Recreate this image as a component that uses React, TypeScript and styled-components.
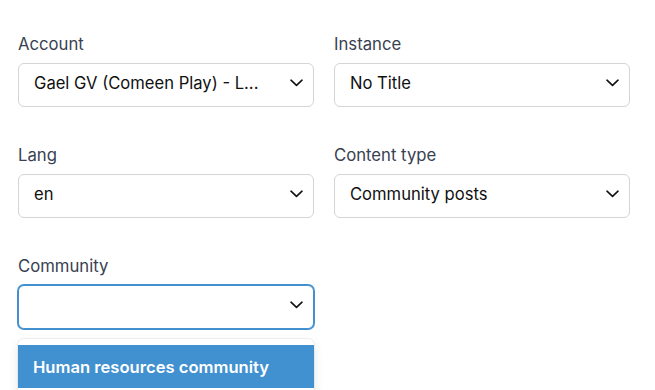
import React from "react";
import styled, { createGlobalStyle } from "styled-components";

const Global = createGlobalStyle`
  html, body { margin: 0; padding: 0; background: #ffffff; }
  body { font-family: Inter, "Noto Sans", "Liberation Sans", sans-serif; -webkit-font-smoothing: antialiased; }
  * { box-sizing: border-box; }
`;

const Form = styled.div`
  display: grid;
  grid-template-columns: 296px 296px;
  column-gap: 20px;
  row-gap: 36px;
  padding: 32px 26px 0 18px;
  align-items: start;
  min-height: 390px;
  align-content: start;
`;

const Field = styled.div`
  position: relative;
  display: flex;
  flex-direction: column;
  gap: 7px;
`;

const Label = styled.label`
  font-size: 16.7px;
  line-height: 24px;
  color: #374151;
`;

const SelectBox = styled.div<{ $focused?: boolean }>`
  height: 44px;
  display: flex;
  align-items: center;
  justify-content: space-between;
  gap: 12px;
  border-radius: 6px;
  background: #fff;
  border: 1px solid ${(p) => (p.$focused ? "#4290d0" : "#d4d4d8")};
  box-shadow: ${(p) => (p.$focused ? "0 0 0 1px #4290d0" : "none")};
  padding: 0 10px 5px 15px;
  font-size: 16.6px;
  color: #111111;
`;

const Value = styled.span`
  white-space: nowrap;
  overflow: hidden;
  text-overflow: ellipsis;
`;

const Chevron = styled.svg`
  flex: none;
  width: 13px;
  height: 8px;
`;

const Menu = styled.div`
  position: absolute;
  z-index: 2;
  left: 0;
  right: 0;
  top: calc(100% + 10px);
  background: #fff;
  border-radius: 6px;
  padding: 6px 0;
  box-shadow: 0 0 0 1px rgba(0, 0, 0, 0.05), 0 4px 11px rgba(0, 0, 0, 0.1);
`;

const Option = styled.div<{ $active?: boolean }>`
  height: 43px;
  display: flex;
  align-items: center;
  padding: 0 15px;
  font-size: 16.6px;
  font-weight: 600;
  background: ${(p) => (p.$active ? "#4191d0" : "transparent")};
  color: ${(p) => (p.$active ? "#ffffff" : "#111111")};
`;

const ChevronIcon = () => (
  <Chevron viewBox="0 0 13 8" fill="none">
    <path d="M1 1.2 6.5 6.4 12 1.2" stroke="#111" strokeWidth="1.6" strokeLinecap="round" strokeLinejoin="round" />
  </Chevron>
);

type SelectProps = { label: string; value: string; focused?: boolean; children?: React.ReactNode };

const Select = ({ label, value, focused, children }: SelectProps) => (
  <Field>
    <Label>{label}</Label>
    <SelectBox $focused={focused}>
      <Value>{value}</Value>
      <ChevronIcon />
    </SelectBox>
    {children}
  </Field>
);

export default function App() {
  return (
    <>
      <Global />
      <Form>
        <Select label="Account" value="Gael GV (Comeen Play) - L..." />
        <Select label="Instance" value="No Title" />
        <Select label="Lang" value="en" />
        <Select label="Content type" value="Community posts" />
        <Select label="Community" value="" focused>
          <Menu>
            <Option $active>Human resources community</Option>
          </Menu>
        </Select>
      </Form>
    </>
  );
}
